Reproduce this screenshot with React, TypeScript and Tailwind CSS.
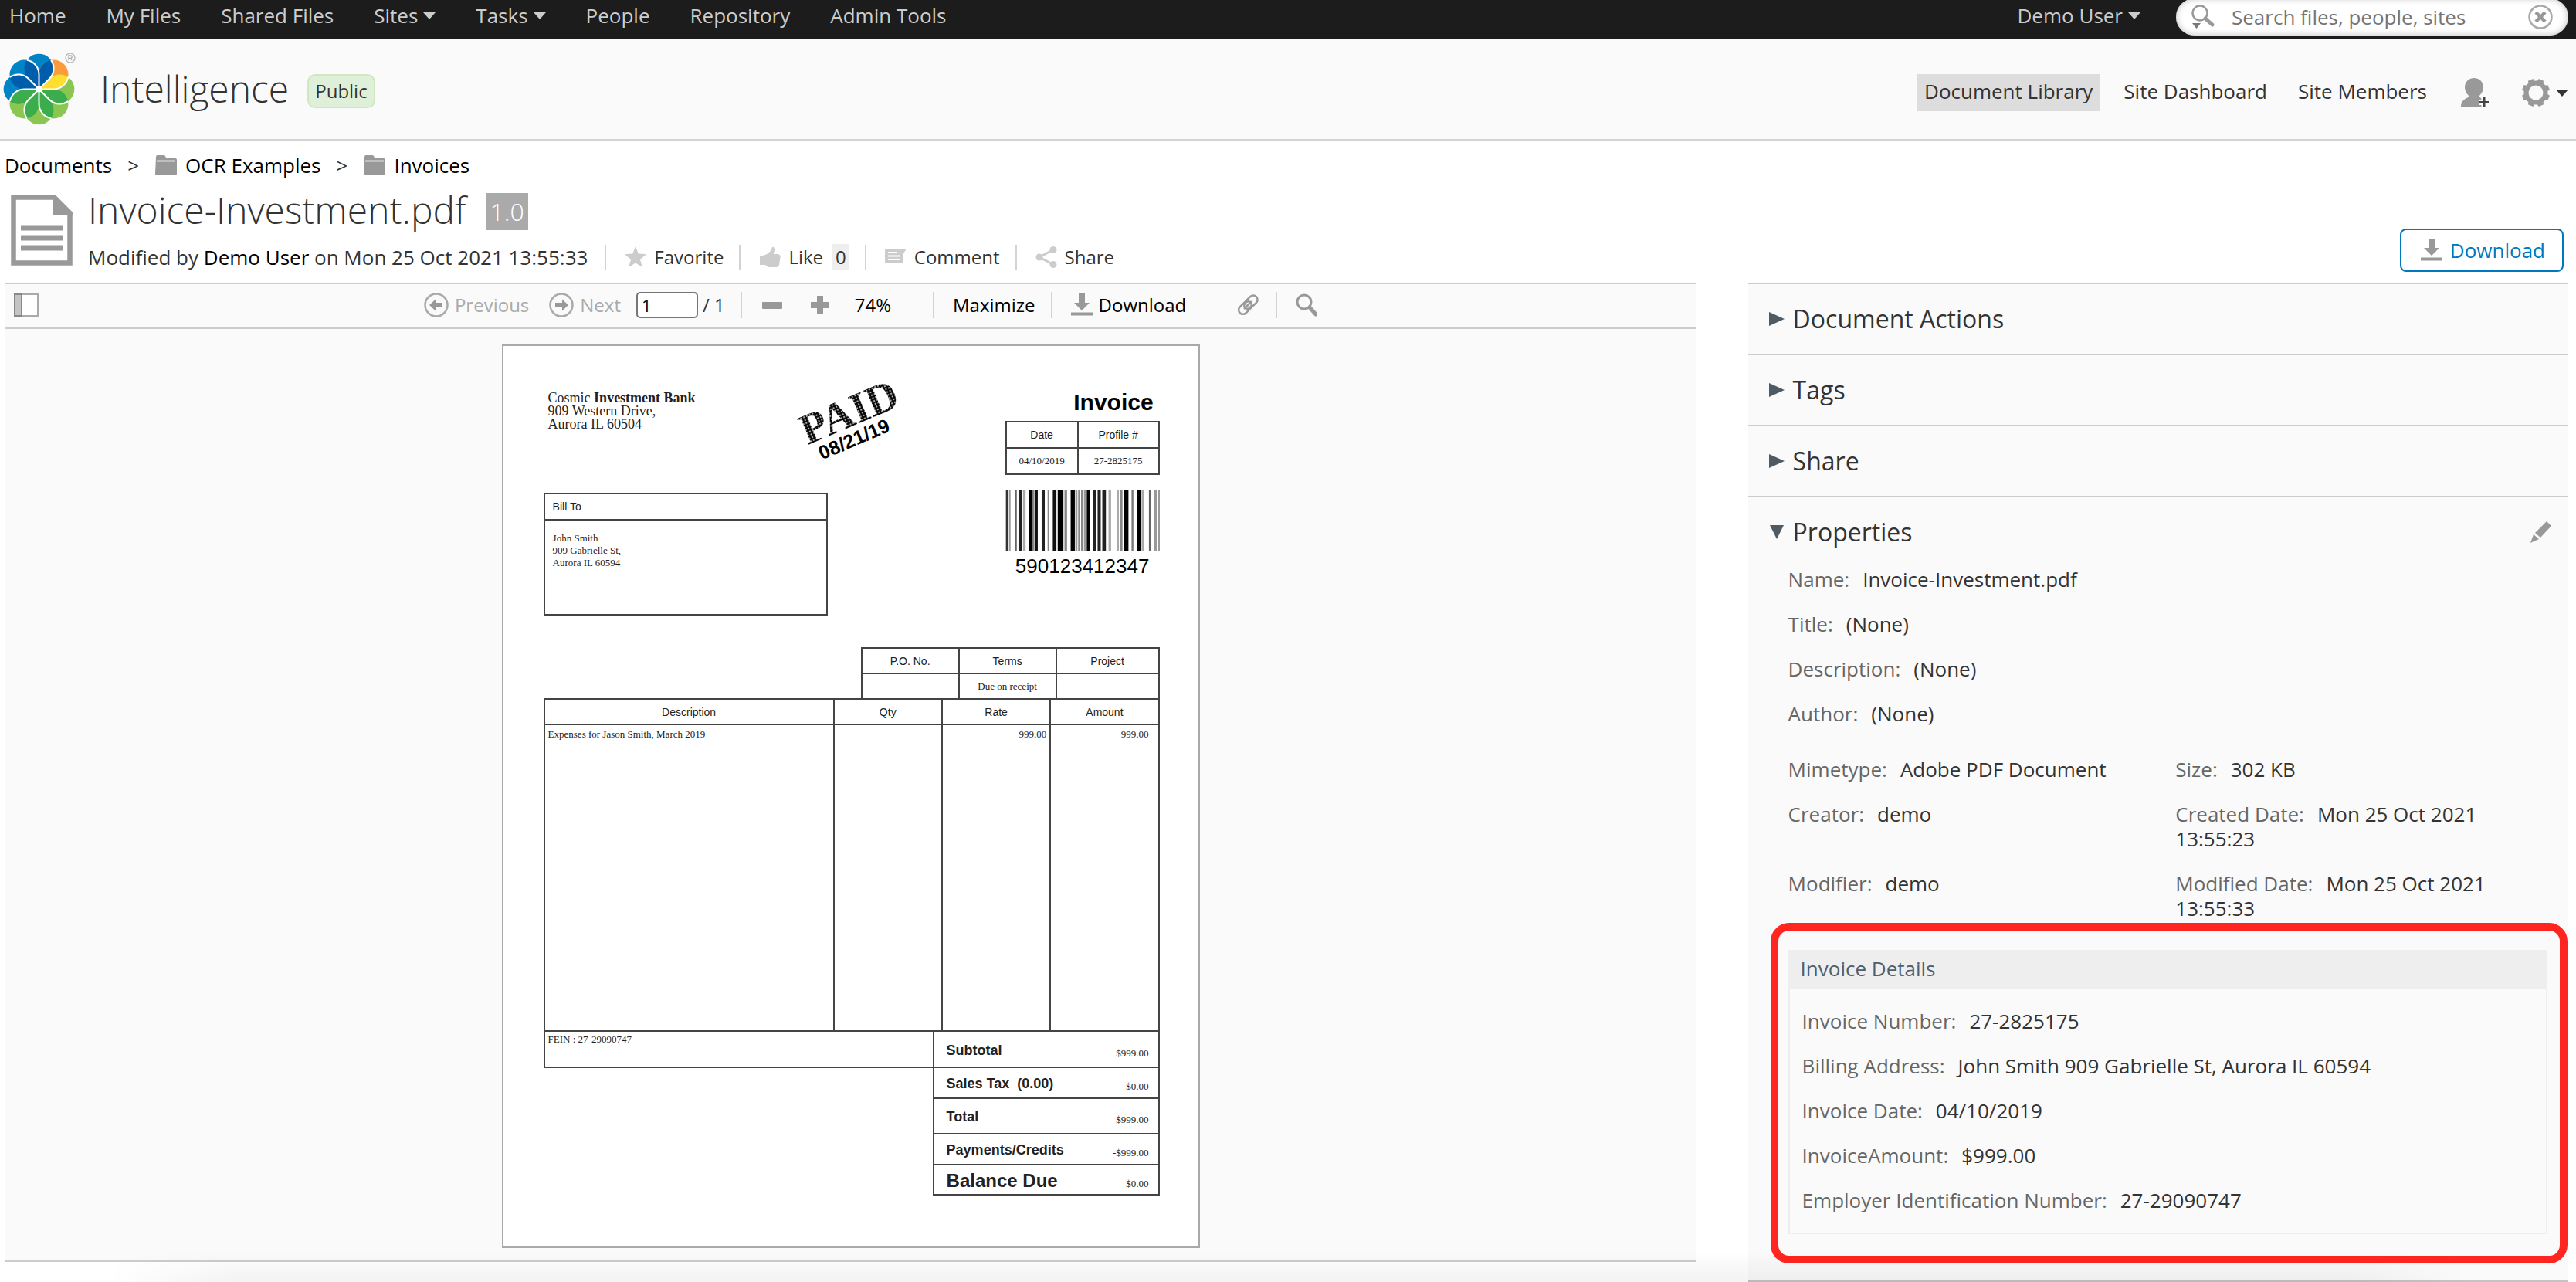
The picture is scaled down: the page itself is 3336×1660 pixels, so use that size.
import React from "react";

const GREY = "#999999";
const FAINT = "#cccccc";

const BLUE = "#0084c6";
const DEEP_BLUE = "#005dab";
const GREEN = "#8bc750";
const DEEP_GREEN = "#3bad4c";

const petals = [BLUE, "#ff9a3c", GREEN, GREEN, GREEN, GREEN, BLUE, BLUE];
const overlaps = [DEEP_BLUE, DEEP_BLUE, "#ffde2e", DEEP_GREEN, DEEP_GREEN, DEEP_GREEN, DEEP_GREEN, DEEP_BLUE];

function Logo() {
  return (
    <svg className="h-[110px] w-[100px] shrink-0" viewBox="0 0 100 110" role="img" aria-label="Site logo">
      <g transform="translate(50.5 55.5)">
        {petals.map((fill, i) => (
          <path key={i} d="M0 0L-13.4-13.4A19 19 0 1 1 13.4-13.4Z" fill={fill} transform={`rotate(${i * 45})`} />
        ))}
        {overlaps.map((fill, i) => (
          <path
            key={i}
            d="M0 0L0-19A19 19 0 0 0-15.6-37.7A19 19 0 0 0-13.4-13.4Z"
            fill={fill}
            transform={`rotate(${i * 45})`}
          />
        ))}
        {overlaps.map((_, i) => (
          <path
            key={i}
            d="M0 0L0-19A19 19 0 0 0-15.6-37.7"
            fill="none"
            stroke="#fff"
            strokeWidth="2"
            transform={`rotate(${i * 45})`}
          />
        ))}
        <circle r="4" fill="#fff" />
      </g>
      <circle cx="91" cy="15" r="6" fill="none" stroke="#bbb" strokeWidth="1.5" />
      <path d="M89 18V12H91.5A1.6 1.6 0 0 1 91.5 15.3H89M91.3 15.3L93 18" fill="none" stroke="#aaa" strokeWidth="1.3" />
    </svg>
  );
}

function Caret() {
  return (
    <svg className="h-[9px] w-[16px]" viewBox="0 0 16 9" aria-hidden="true">
      <path d="M0 0H16L8 9Z" fill="currentColor" />
    </svg>
  );
}

function Folder() {
  return (
    <svg className="h-[26px] w-[30px]" viewBox="0 0 30 26" aria-hidden="true">
      <path d="M2 2Q2 0 4 0H12Q14 0 14.500 2L15 4H27Q29 4 29 6V24Q29 26 27 26H3Q1 26 1 24Z" fill={GREY} />
      <path d="M3 7.500H27" stroke="#e4e4e4" strokeWidth="2" />
    </svg>
  );
}

function DocIcon() {
  return (
    <svg className="h-[92px] w-[80px] shrink-0" viewBox="0 0 80 92" aria-hidden="true">
      <path d="M3.500 3.500H56L76.500 24V88.500H3.500Z" fill="#fff" stroke={GREY} strokeWidth="6.500" />
      <path d="M54 1H58L80 23V27H54Z" fill={GREY} />
      <path d="M13 43H67M13 56H67M13 69H67" stroke={GREY} strokeWidth="7" />
    </svg>
  );
}

function DownloadIcon() {
  return (
    <svg className="h-[30px] w-[28px]" viewBox="0 0 28 30" aria-hidden="true">
      <path d="M10 0H18V12H24L14 22L4 12H10Z" fill={GREY} />
      <path d="M0 26.500H28" stroke={GREY} strokeWidth="4" />
    </svg>
  );
}

function Magnifier() {
  return (
    <svg className="h-[30px] w-[28px]" viewBox="0 0 28 30" aria-hidden="true">
      <circle cx="11" cy="11" r="9" fill="none" stroke={GREY} strokeWidth="3" />
      <path d="M18 18L26 27" stroke={GREY} strokeWidth="5" strokeLinecap="round" />
    </svg>
  );
}

function SearchMenuIcon() {
  return (
    <svg className="h-[32px] w-[34px]" viewBox="0 0 34 32" aria-hidden="true">
      <circle cx="13" cy="11" r="9.500" fill="none" stroke={GREY} strokeWidth="2.500" />
      <path d="M20 18L29 26" stroke={GREY} strokeWidth="5" strokeLinecap="round" />
      <path d="M3 24H14L8.500 31Z" fill="#777" />
    </svg>
  );
}

function Sep({ tall }: { tall?: boolean }) {
  return <span className={tall ? "h-[34px] w-[2px] bg-[#d3d3d3]" : "h-[32px] w-[2px] bg-[#d3d3d3]"} />;
}

function ArrowCircle({ flip }: { flip?: boolean }) {
  return (
    <svg className="h-[32px] w-[32px]" viewBox="0 0 32 32" aria-hidden="true">
      <circle cx="16" cy="16" r="14.500" fill="none" stroke="#aaa" strokeWidth="2.500" />
      <path
        d="M7 16L15 8.500V13H24V19H15V23.500Z"
        fill="#999"
        transform={flip ? "rotate(180 16 16)" : undefined}
      />
    </svg>
  );
}

function TopLink({ label, menu }: { label: string; menu?: boolean }) {
  return (
    <a href="#" className="flex items-center gap-[7px] whitespace-nowrap">
      {label}
      {menu && <Caret />}
    </a>
  );
}

function TopBar() {
  return (
    <div className="flex h-[50px] items-center overflow-hidden bg-[#1c1c1c] pr-[10px] pb-[10px] pl-3 text-[26px] text-[#cccccc]">
      <nav className="flex gap-[52px]">
        <TopLink label="Home" />
        <TopLink label="My Files" />
        <TopLink label="Shared Files" />
        <TopLink label="Sites" menu />
        <TopLink label="Tasks" menu />
        <TopLink label="People" />
        <TopLink label="Repository" />
        <TopLink label="Admin Tools" />
      </nav>
      <div className="ml-auto flex items-center gap-[46px]">
        <TopLink label="Demo User" menu />
        <div className="mt-1 flex h-[48px] w-[508px] items-center rounded-[24px] bg-white pr-5 pl-[18px] shadow-[inset_0_0_8px_#bbb]">
          <button type="button" aria-label="Search options">
            <SearchMenuIcon />
          </button>
          <input
            type="search"
            aria-label="Search files, people, sites"
            placeholder="Search files, people, sites"
            className="ml-5 min-w-0 flex-1 bg-transparent text-[26px] outline-none placeholder:text-[#757575]"
          />
          <button type="button" aria-label="Clear search">
            <svg className="h-[32px] w-[32px]" viewBox="0 0 32 32" aria-hidden="true">
              <circle cx="16" cy="16" r="14.500" fill="none" stroke="#aaa" strokeWidth="2.500" />
              <path d="M10 10L22 22M22 10L10 22" stroke="#999" strokeWidth="4.500" />
            </svg>
          </button>
        </div>
      </div>
    </div>
  );
}

const gearTeeth = [0, 45, 90, 135, 180, 225, 270, 315];

function SiteHeader() {
  return (
    <header className="flex h-[132px] items-center border-b-2 border-[#d3d3d3] bg-[#fafafa] pr-[10px]">
      <Logo />
      <h1 className="ml-[30px] text-[48px] leading-[64px] font-light">Intelligence</h1>
      <span className="mt-[6px] ml-6 h-[44px] rounded-[10px] border-2 border-[#cfe8c0] bg-[#def0d9] px-2 text-[24px] leading-[40px]">
        Public
      </span>
      <nav className="mt-[10px] ml-auto flex text-[26px] leading-[44px]">
        <a href="#" className="bg-[#dddddd] px-[10px] pb-1">
          Document Library
        </a>
        <a href="#" className="ml-[30px]">
          Site Dashboard
        </a>
        <a href="#" className="ml-10">
          Site Members
        </a>
        <button type="button" aria-label="Add users" className="ml-[43px]">
          <svg className="h-[40px] w-[38px]" viewBox="0 0 38 40" aria-hidden="true">
            <path
              d="M18 1C25 1 30 6 30 13C30 18 27 22 24 25C27 27 29 28 29 31V38H1C1 31 6 28 12 25C9 22 6 18 6 13C6 6 11 1 18 1Z"
              fill={GREY}
            />
            <path d="M31 25V40M24 32.500H38" stroke="#fafafa" strokeWidth="7" />
            <path d="M31 26V39M25 32.500H37" stroke="#444" strokeWidth="3" />
          </svg>
        </button>
        <button type="button" aria-label="Site configuration" className="ml-[41px] flex items-center gap-[7px]">
          <svg className="h-[38px] w-[38px]" viewBox="-19 -19 38 38" aria-hidden="true">
            {gearTeeth.map((a) => (
              <path key={a} d="M-4.500-12L-3.500-18H3.500L4.500-12Z" fill={GREY} transform={`rotate(${a + 22.5})`} />
            ))}
            <circle r="12.500" fill="none" stroke={GREY} strokeWidth="6" />
          </svg>
          <Caret />
        </button>
      </nav>
    </header>
  );
}

function Breadcrumb() {
  return (
    <nav aria-label="Breadcrumb" className="mt-[14px] flex items-center text-[26px] leading-[36px] text-black">
      <a href="#">Documents</a>
      <span className="ml-5 text-[#333]">&gt;</span>
      <a href="#" className="ml-5 flex items-center gap-[10px]">
        <Folder />
        OCR Examples
      </a>
      <span className="ml-5 text-[#333]">&gt;</span>
      <a href="#" className="ml-5 flex items-center gap-[10px]">
        <Folder />
        Invoices
      </a>
    </nav>
  );
}

function Social() {
  return (
    <div className="ml-[22px] flex items-center text-[24px] leading-[34px]">
      <Sep />
      <button type="button" className="ml-6 flex items-center gap-[10px]">
        <svg className="h-[28px] w-[28px]" viewBox="0 0 28 28" aria-hidden="true">
          <path d="M14 0L17.800 9.500L28 10.300L20 17L22.800 27L14 21.500L5.200 27L8 17L0 10.300L10.200 9.500Z" fill={FAINT} />
        </svg>
        Favorite
      </button>
      <span className="ml-5 flex">
        <Sep />
      </span>
      <button type="button" className="ml-6 flex items-center gap-[10px]">
        <svg className="h-[28px] w-[28px]" viewBox="0 0 28 28" aria-hidden="true">
          <path d="M1 13L8 11C13 9 16 5 17 1Q21 0 21 5L19.500 10H25Q28 11 27.500 14L26 24Q25 27 22 27H12L8 24H1Z" fill={FAINT} />
        </svg>
        Like
      </button>
      <span className="ml-3 bg-[#eeeeee] px-1">0</span>
      <span className="ml-5 flex">
        <Sep />
      </span>
      <button type="button" className="ml-6 flex items-center gap-[10px]">
        <svg className="h-[28px] w-[28px]" viewBox="0 0 28 28" aria-hidden="true">
          <path d="M0 3H28L23 11V21H0Z" fill={FAINT} />
          <path d="M4 8H15M4 12.500H19M4 17H19" stroke="#fff" strokeWidth="2" />
        </svg>
        Comment
      </button>
      <span className="ml-5 flex">
        <Sep />
      </span>
      <button type="button" className="ml-6 flex items-center gap-[10px]">
        <svg className="h-[28px] w-[28px]" viewBox="0 0 28 28" aria-hidden="true">
          <path d="M23 4.500L5 14L23 23.500" fill="none" stroke={FAINT} strokeWidth="3" />
          <circle cx="23" cy="4.500" r="4.500" fill={FAINT} />
          <circle cx="5" cy="14" r="4.500" fill={FAINT} />
          <circle cx="23" cy="23.500" r="4.500" fill={FAINT} />
        </svg>
        Share
      </button>
    </div>
  );
}

function DocumentHeader() {
  return (
    <div className="mt-4 flex items-end justify-between">
      <div className="flex items-start gap-5 pb-4 pl-2">
        <div className="pt-1">
          <DocIcon />
        </div>
        <div>
          <div className="flex items-start gap-[26px]">
            <h2 className="text-[48px] leading-[48px] font-light">Invoice-Investment.pdf</h2>
            <span className="mt-[2px] bg-[#aaaaaa] px-[5px] text-[32px] leading-[48px] font-light text-white">1.0</span>
          </div>
          <div className="mt-[18px] flex items-center">
            <p className="text-[26px] leading-[34px]">
              Modified by{" "}
              <a href="#" className="text-black">
                Demo User
              </a>{" "}
              on Mon 25 Oct 2021 13:55:33
            </p>
            <Social />
          </div>
        </div>
      </div>
      <button
        type="button"
        className="mr-[6px] mb-[14px] flex h-[56px] items-center gap-[10px] rounded-[8px] border-2 border-[#0078bf] bg-white pr-[22px] pl-[25px] text-[26px] text-[#0078bf]"
      >
        <DownloadIcon />
        Download
      </button>
    </div>
  );
}

function Toolbar() {
  return (
    <div className="flex h-[60px] items-center border-y-2 border-[#cccccc] pb-[2px] pl-3 text-[24px] leading-[34px] text-black">
      <button type="button" aria-label="Show sidebar">
        <svg className="h-[30px] w-[32px]" viewBox="0 0 32 30" aria-hidden="true">
          <rect x="1" y="1" width="30" height="28" fill="#fff" stroke="#aaa" strokeWidth="2" />
          <rect x="1" y="1" width="9" height="28" fill="#c4c4c4" stroke="#888" strokeWidth="2" />
        </svg>
      </button>
      <div className="flex flex-1 items-center justify-center pl-2">
        <button type="button" disabled className="flex items-center gap-2 text-[#aaaaaa]">
          <ArrowCircle />
          Previous
        </button>
        <button type="button" disabled className="ml-[26px] flex items-center gap-2 text-[#aaaaaa]">
          <ArrowCircle flip />
          Next
        </button>
        <input
          type="text"
          aria-label="Page number"
          defaultValue="1"
          className="ml-5 h-[34px] w-[80px] rounded-[5px] border-2 border-[#767676] bg-white px-[5px] text-[22px]"
        />
        <span className="ml-[6px] text-[#333]">/ 1</span>
        <span className="ml-5 flex">
          <Sep tall />
        </span>
        <button type="button" aria-label="Zoom out" className="ml-[26px]">
          <svg className="h-[26px] w-[26px]" viewBox="0 0 26 26" aria-hidden="true">
            <rect y="9" width="26" height="9" rx="1" fill={GREY} />
          </svg>
        </button>
        <button type="button" aria-label="Zoom in" className="ml-9">
          <svg className="h-[26px] w-[26px]" viewBox="0 0 26 26" aria-hidden="true">
            <path d="M9 1H17V9H25V17H17V25H9V17H1V9H9Z" fill={GREY} />
          </svg>
        </button>
        <span className="ml-8">74%</span>
        <span className="ml-[54px] flex">
          <Sep tall />
        </span>
        <button type="button" className="ml-6">
          Maximize
        </button>
        <span className="ml-5 flex">
          <Sep tall />
        </span>
        <button type="button" className="ml-6 flex items-center gap-2">
          <DownloadIcon />
          Download
        </button>
        <button type="button" aria-label="Link" className="ml-16">
          <svg className="h-[32px] w-[32px]" viewBox="0 0 32 32" aria-hidden="true">
            <g fill="none" stroke="#999" strokeWidth="2.500" strokeLinecap="round" transform="rotate(-45 16 16)">
              <path d="M20 10.500H7A5.500 5.500 0 0 0 7 21.500H13" />
              <path d="M12 21.500H26A5.500 5.500 0 0 0 26 10.500H19" />
              <path d="M10 16H22" />
              <path d="M17 12A4 4 0 0 1 17 20M15 20A4 4 0 0 1 15 12" />
            </g>
          </svg>
        </button>
        <span className="ml-5 flex">
          <Sep tall />
        </span>
        <button type="button" aria-label="Find in document" className="ml-6">
          <Magnifier />
        </button>
      </div>
    </div>
  );
}

const bars: [number, number, string][] = [
  [2, 8, "#333"], [14, 6, "#999"], [38, 6, "#666"], [52, 12, "#222"], [68, 10, "#aaa"], [90, 16, "#000"],
  [106, 6, "#888"], [115, 10, "#111"], [140, 12, "#222"], [163, 6, "#888"], [183, 14, "#111"], [202, 22, "#000"],
  [228, 10, "#888"], [252, 16, "#000"], [270, 8, "#999"], [281, 8, "#888"], [292, 8, "#888"], [303, 8, "#999"],
  [314, 11, "#000"], [338, 12, "#222"], [356, 12, "#222"], [374, 14, "#222"], [398, 10, "#aaa"], [430, 8, "#aaa"],
  [442, 10, "#888"], [457, 18, "#000"], [487, 7, "#777"], [507, 18, "#000"], [527, 8, "#aaa"], [554, 8, "#666"],
  [574, 10, "#999"], [588, 8, "#999"],
];

function Barcode() {
  return (
    <svg className="mt-5 h-[78px] w-full" viewBox="0 0 596 234" preserveAspectRatio="none" role="img" aria-label="Barcode">
      {bars.map(([x, w, fill]) => (
        <rect key={x} x={x} width={w} height="234" fill={fill} />
      ))}
    </svg>
  );
}

const SANS = "text-[14px] font-['Liberation_Sans',sans-serif]";
const cell = "border-2 border-[#444] p-0 font-normal";

function Totals() {
  const rows: [string, string, string][] = [
    ["Subtotal", "$999.00", "h-[47px]"],
    ["Sales Tax  (0.00)", "$0.00", "h-[40px]"],
    ["Total", "$999.00", "h-[46px]"],
    ["Payments/Credits", "-$999.00", "h-[40px]"],
    ["Balance Due", "$0.00", "h-[39px]"],
  ];
  return (
    <table className="-mt-[2px] w-[294px] border-collapse border-2 border-[#444]">
      <tbody>
        {rows.map(([label, value, height]) => (
          <tr key={label} className={`${height} border-2 border-[#444]`}>
            <th
              scope="row"
              className={`p-0 pt-[2px] pl-4 text-left font-bold whitespace-pre font-['Liberation_Sans',sans-serif] ${
                label === "Balance Due" ? "text-[24px] leading-[24px]" : "text-[18px] leading-[20px]"
              }`}
            >
              {label}
            </th>
            <td className="p-0 pt-[10px] pr-3 text-right">{value}</td>
          </tr>
        ))}
      </tbody>
    </table>
  );
}

function InvoiceSheet() {
  return (
    <article className="relative mx-auto mt-5 mb-4 w-[904px] border-2 border-[#a9a9a9] bg-white pt-[57px] pr-[50px] pb-[66px] pl-[52px] font-['Liberation_Serif',serif] text-[13px] leading-[16px] text-[#222]">
      <div className="absolute top-[62px] left-[386px] -rotate-[23deg] text-black">
        <p className="bg-[radial-gradient(#aaa_1px,#0a0a0a_1px)] bg-[length:4px_4px] bg-clip-text text-[56px] leading-[44px] font-bold text-transparent">
          PAID
        </p>
        <p className="pl-[10px] text-[25px] leading-[26px] font-bold font-['Liberation_Sans',sans-serif]">08/21/19</p>
      </div>
      <div className="flex justify-between">
        <div>
          <address className="pt-[2px] pl-[6px] text-[18px] leading-[17px] not-italic">
            Cosmic <b>Investment Bank</b>
            <br />
            909 Western Drive,
            <br />
            Aurora IL 60504
          </address>
          <section className="mt-[80px] w-[368px] border-2 border-[#444]">
            <h3 className={`${SANS} border-b-2 border-[#444] px-[10px] py-2`}>Bill To</h3>
            <p className="h-[121px] px-[10px] pt-[15px]">
              John Smith
              <br />
              909 Gabrielle St,
              <br />
              Aurora IL 60594
            </p>
          </section>
        </div>
        <div className="w-[200px]">
          <h3 className="pr-2 text-right text-[30px] leading-[32px] font-bold text-black font-['Liberation_Sans',sans-serif]">
            Invoice
          </h3>
          <table className="mt-[8px] w-full table-fixed border-collapse text-center">
            <thead>
              <tr className={`${SANS} h-[34px]`}>
                <th className={`${cell} w-[93px]`}>Date</th>
                <th className={cell}>Profile #</th>
              </tr>
            </thead>
            <tbody>
              <tr className="h-[34px]">
                <td className={cell}>04/10/2019</td>
                <td className={cell}>27-2825175</td>
              </tr>
            </tbody>
          </table>
          <Barcode />
          <p className="mt-[6px] text-center text-[26px] leading-[28px] text-black font-['Liberation_Sans',sans-serif]">
            590123412347
          </p>
        </div>
      </div>
      <table className="mt-[41px] ml-auto w-[387px] table-fixed border-collapse text-center">
        <thead>
          <tr className={`${SANS} h-[33px]`}>
            <th className={cell}>P.O. No.</th>
            <th className={cell}>Terms</th>
            <th className={`${cell} w-[133px]`}>Project</th>
          </tr>
        </thead>
        <tbody>
          <tr className="h-[33px]">
            <td className={cell} />
            <td className={cell}>Due on receipt</td>
            <td className={cell} />
          </tr>
        </tbody>
      </table>
      <table className="-mt-[2px] w-full table-fixed border-collapse">
        <thead>
          <tr className={`${SANS} h-[33px]`}>
            <th className={`${cell} w-[375px]`}>Description</th>
            <th className={cell}>Qty</th>
            <th className={cell}>Rate</th>
            <th className={cell}>Amount</th>
          </tr>
        </thead>
        <tbody>
          <tr className="h-[397px] align-top">
            <td className={`${cell} pt-1 pl-1`}>Expenses for Jason Smith, March 2019</td>
            <td className={cell} />
            <td className={`${cell} pt-1 pr-1 text-right`}>999.00</td>
            <td className={`${cell} pt-1 pr-3 text-right`}>999.00</td>
          </tr>
        </tbody>
      </table>
      <div className="flex items-start">
        <p className="h-[47px] flex-1 border-b-2 border-l-2 border-[#444] pt-[2px] pl-1">FEIN : 27-29090747</p>
        <Totals />
      </div>
    </article>
  );
}

function Section({ title }: { title: string }) {
  return (
    <section className="border-t-2 border-[#cccccc]">
      <button type="button" className="flex h-[90px] w-full items-center gap-[11px] pl-[27px] text-[32px]">
        <svg className="h-[20px] w-[20px]" viewBox="0 0 20 20" aria-hidden="true">
          <path d="M0 1L20 10L0 19Z" fill="#4f5b64" />
        </svg>
        {title}
      </button>
    </section>
  );
}

function Field({ label, value }: { label: string; value: string }) {
  return (
    <div>
      <dt className="mr-[17px] inline text-[#666666]">{label}:</dt>
      <dd className="inline">{value}</dd>
    </div>
  );
}

function DetailsPanel() {
  return (
    <aside className="w-[32%] border-b-2 border-[#c4c4c4] bg-[#fafafa] text-[26px] leading-[32px]">
      <Section title="Document Actions" />
      <Section title="Tags" />
      <Section title="Share" />
      <section className="border-t-2 border-[#cccccc] pb-[60px]">
        <div className="flex h-[90px] items-center justify-between pr-[22px] pl-[27px]">
          <button type="button" className="flex items-center gap-[11px] text-[32px]">
            <svg className="h-[20px] w-[20px]" viewBox="0 0 20 20" aria-hidden="true">
              <path d="M1 1H19L10 19Z" fill="#4f5b64" />
            </svg>
            Properties
          </button>
          <button type="button" aria-label="Edit properties">
            <svg className="h-[28px] w-[28px]" viewBox="0 0 28 28" aria-hidden="true">
              <path d="M22 0L28 6L14 21L7 15Z" fill={GREY} />
              <path d="M5 17L12 23L1 28Z" fill={GREY} />
            </svg>
          </button>
        </div>
        <div className="pr-[27px] pl-[52px]">
          <dl className="grid gap-[26px]">
            <Field label="Name" value="Invoice-Investment.pdf" />
            <Field label="Title" value="(None)" />
            <Field label="Description" value="(None)" />
            <Field label="Author" value="(None)" />
          </dl>
          <dl className="mt-10 grid grid-cols-2 gap-x-5 gap-y-[26px]">
            <Field label="Mimetype" value="Adobe PDF Document" />
            <Field label="Size" value="302 KB" />
            <Field label="Creator" value="demo" />
            <Field label="Created Date" value="Mon 25 Oct 2021 13:55:23" />
            <Field label="Modifier" value="demo" />
            <Field label="Modified Date" value="Mon 25 Oct 2021 13:55:33" />
          </dl>
          <div className="relative mt-[38px] border-2 border-[#eeeeee]">
            <div className="pointer-events-none absolute -top-[37px] -right-[28px] -bottom-[40px] -left-[25px] rounded-[24px] border-[10px] border-[#ff2621]" />
            <h3 className="bg-[#eeeeee] px-[14px] pt-[6px] pb-[10px] text-[#4f5f6d]">Invoice Details</h3>
            <dl className="grid gap-[26px] px-4 py-[26px]">
              <Field label="Invoice Number" value="27-2825175" />
              <Field label="Billing Address" value="John Smith 909 Gabrielle St, Aurora IL 60594" />
              <Field label="Invoice Date" value="04/10/2019" />
              <Field label="InvoiceAmount" value="$999.00" />
              <Field label="Employer Identification Number" value="27-29090747" />
            </dl>
          </div>
        </div>
      </section>
    </aside>
  );
}

export default function App() {
  return (
    <div className="relative bg-white font-['Open_Sans',sans-serif] text-[#333333]">
      <TopBar />
      <SiteHeader />
      <main className="pr-[10px] pl-[6px]">
        <Breadcrumb />
        <DocumentHeader />
        <div className="flex items-start justify-between">
          <section className="w-[66%] border-b-2 border-[#cccccc] bg-[#fafafa]">
            <Toolbar />
            <InvoiceSheet />
          </section>
          <DetailsPanel />
        </div>
      </main>
      <div className="pointer-events-none absolute right-[140px] bottom-0 left-[140px] h-[40px] bg-gradient-to-t from-black/5 to-transparent [mask-image:linear-gradient(to_right,transparent,black_160px,black_calc(100%-160px),transparent)]" />
    </div>
  );
}
